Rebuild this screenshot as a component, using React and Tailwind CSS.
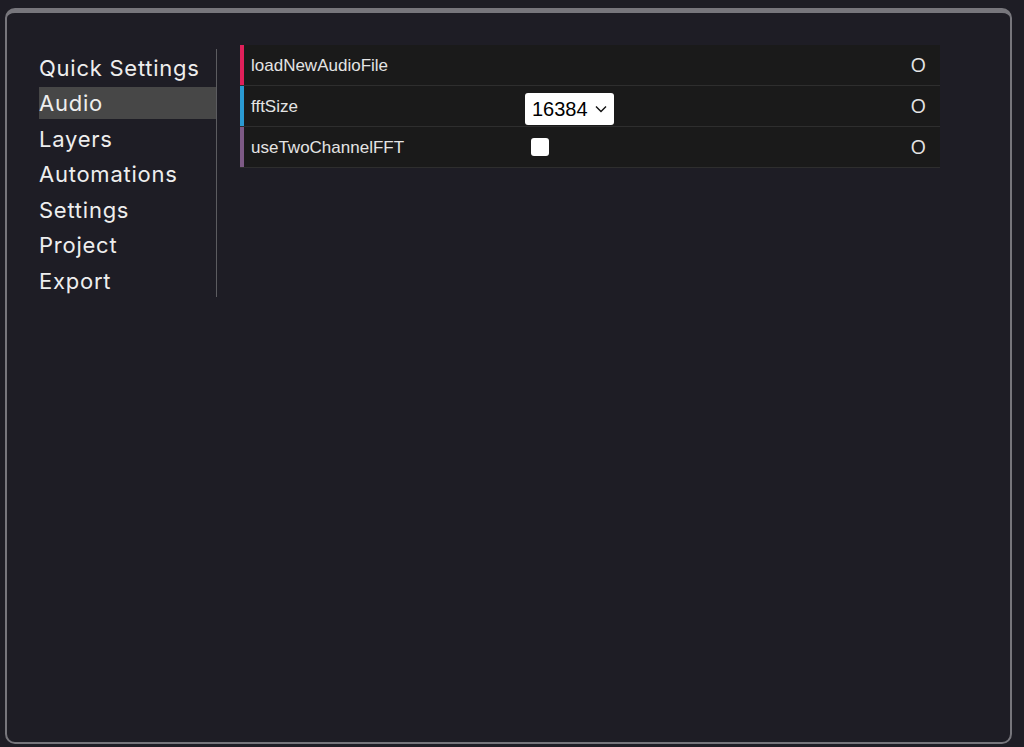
import React from "react";

const nav = ["Quick Settings", "Audio", "Layers", "Automations", "Settings", "Project", "Export"];

function Row({ color, label, children }) {
  return (
    <div className="flex h-[41px] bg-[#1a1a1a] border-b border-[#2e2e2e]">
      <div className="w-[4px] shrink-0" style={{ backgroundColor: color }} />
      <div className="flex flex-1 items-stretch">
        <div className="w-[281px] pl-[7px] pt-[1px] flex items-center text-[17px] text-[#e4e4e4] font-['Liberation_Sans',Arial,sans-serif]">
          {label}
        </div>
        <div className="flex-1 flex">{children}</div>
        <div className="pr-[14px] flex items-center text-[20px] text-[#e4e4e4] font-['Open_Sans',sans-serif]">O</div>
      </div>
    </div>
  );
}

export default function App() {
  return (
    <div className="w-full h-[747px] bg-[#1e1d25] pl-[5px] pt-[8px] pr-[12px] pb-[3px]">
      <div className="h-full border-2 border-t-[5px] border-[#77767c] rounded-[10px] flex items-start pl-[32px] pt-[32px]">
        <div className="mt-[4px] w-[178px] border-r-[1.5px] border-[#5c5c60] pt-[2.5px] flex flex-col gap-[3.5px] font-['Inter',sans-serif] text-[22px] tracking-[0.75px] text-[#eeeeee]">
          {nav.map((n) => (
            <div key={n} className={`h-[32px] flex items-center leading-none ${n === "Audio" ? "bg-[#474747]" : ""}`}>
              {n}
            </div>
          ))}
        </div>
        <div className="ml-[23px] w-[700px] flex flex-col">
          <Row color="#e0205a" label="loadNewAudioFile" />
          <Row color="#2a9ad2" label="fftSize">
            <div className="mt-[7px] h-[32px] w-[89px] bg-white rounded-[3px] flex items-center pl-[7px] gap-[7px] text-black text-[20px] font-['Liberation_Sans',Arial,sans-serif]">
              <span>16384</span>
              <svg width="12" height="8" viewBox="0 0 12 8" fill="none" stroke="#111" strokeWidth="1.4">
                <path d="M1 1.5 L6 6.5 L11 1.5" />
              </svg>
            </div>
          </Row>
          <Row color="#7d5a85" label="useTwoChannelFFT">
            <div className="flex items-center pl-[6px]">
              <div className="w-[18px] h-[18px] bg-white rounded-[3px]" />
            </div>
          </Row>
        </div>
      </div>
    </div>
  );
}
